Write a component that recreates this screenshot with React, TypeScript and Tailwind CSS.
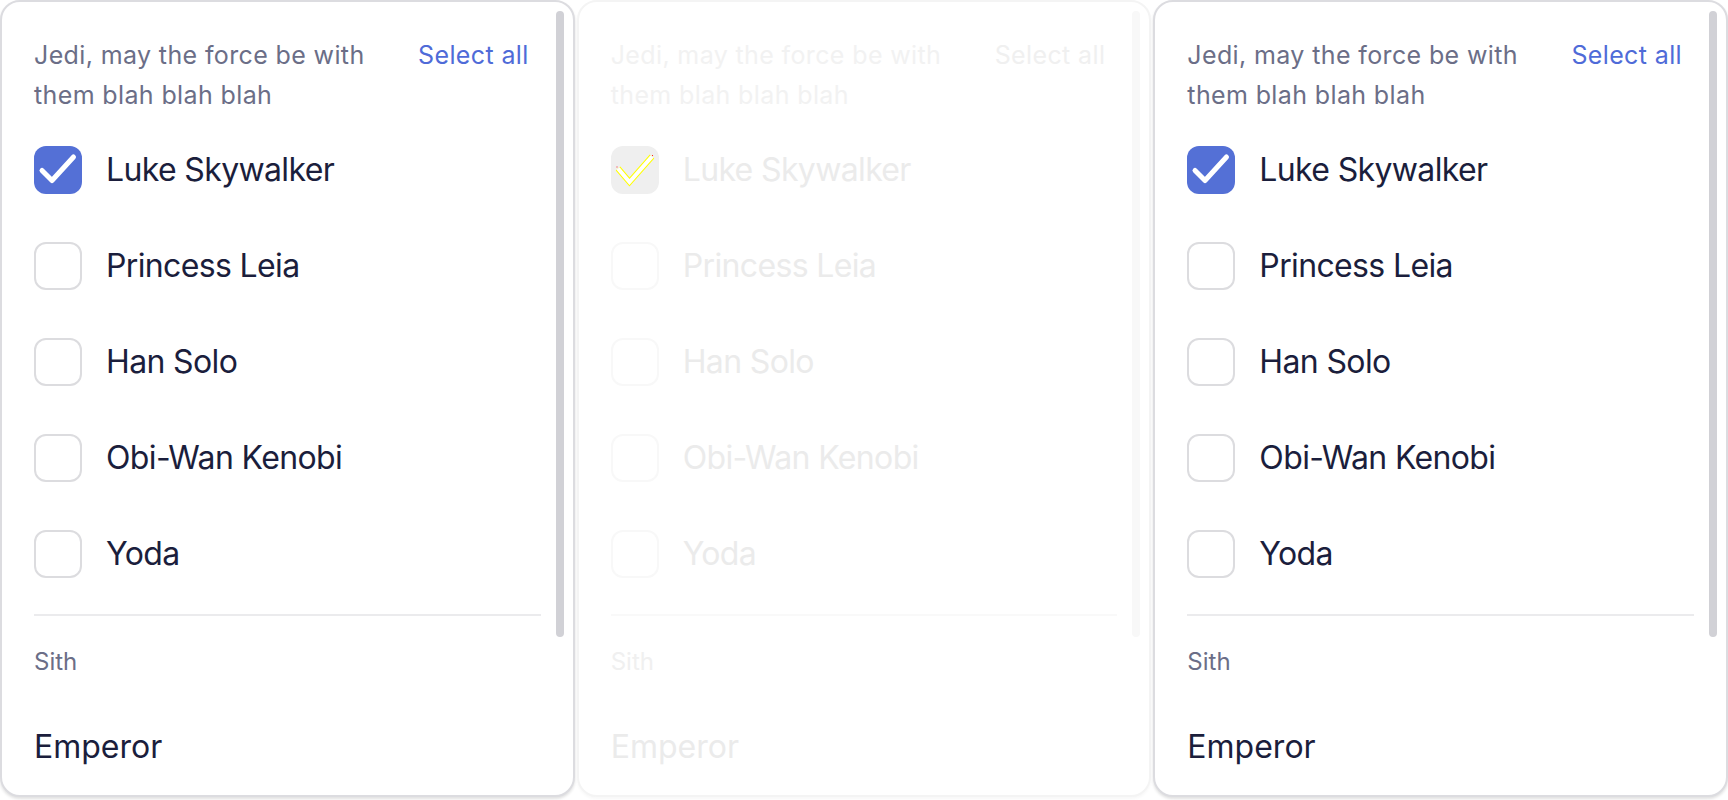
import clsx from 'clsx'

const jedi = ['Luke Skywalker', 'Princess Leia', 'Han Solo', 'Obi-Wan Kenobi', 'Yoda']

function Check() {
  return (
    <svg className="h-12 w-12" viewBox="0 0 48 48" fill="none">
      <path d="M8 24.5 18 34.5 39.5 11" stroke="white" strokeWidth={5} strokeLinecap="round" strokeLinejoin="round" />
    </svg>
  )
}

// disabled check renders as an outlined stroke
function GhostCheck() {
  return (
    <svg className="h-12 w-12" viewBox="0 0 48 48" fill="none">
      <path d="M7 22.5 18.5 36 41 10.5" stroke="#ffff00" strokeWidth={6} strokeLinejoin="miter" />
      <path d="M7 22.5 18.5 36 41 10.5" stroke="white" strokeWidth={4} strokeLinejoin="miter" />
      <rect x="5.5" y="20.5" width="1" height="1" fill="#ff2020" />
      <rect x="41" y="9" width="1" height="1" fill="#ff2020" />
    </svg>
  )
}

function Panel({ disabled }: { disabled?: boolean }) {
  return (
    <div
      className={clsx(
        'relative h-[797px] min-w-0 flex-1 overflow-hidden rounded-[20px] border-2 bg-white',
        disabled ? 'border-[#f4f4f4] shadow-[0_2px_3px_rgba(0,0,0,0.03)]' : 'border-[#dcdce0] shadow-[0_2px_3px_rgba(0,0,0,0.12)]'
      )}
    >
      <div className="px-8 pt-[33px]">
        {/* Header */}
        <div className="flex items-start justify-between pr-[12px]">
          <p className={clsx('w-[360px] text-[25px] leading-[40px] tracking-[0.015em]', disabled ? 'text-[#f2f2f2]' : 'text-[#6b6e87]')}>
            Jedi, may the force be with them blah blah blah
          </p>
          <button className={clsx('text-[25px] leading-[40px] tracking-[0.015em]', disabled ? 'text-[#f0f0f0]' : 'text-[#4f6bd8]')}>
            Select all
          </button>
        </div>

        {/* Jedi */}
        <ul className="mt-[31px] flex flex-col gap-12">
          {jedi.map((name, i) => (
            <li key={name} className="flex h-12 items-center gap-6">
              {i === 0 ? (
                <span
                  className={clsx(
                    'flex h-12 w-12 shrink-0 items-center justify-center rounded-xl',
                    disabled ? 'bg-[#efefef]' : 'bg-[#5470d6]'
                  )}
                >
                  {disabled ? <GhostCheck /> : <Check />}
                </span>
              ) : (
                <span
                  className={clsx(
                    'h-12 w-12 shrink-0 rounded-xl border-2 bg-white',
                    disabled ? 'border-[#f8f8f8]' : 'border-[#dcdcdf]'
                  )}
                />
              )}
              <span
                className={clsx(
                  'text-[32px] leading-[48px] tracking-[-0.02em]',
                  disabled ? 'text-[#ebebeb]' : 'text-[#1b1e3c]'
                )}
              >
                {name}
              </span>
            </li>
          ))}
        </ul>

        <div className={clsx('mt-[36px] h-[2px]', disabled ? 'bg-[#f9f9f9]' : 'bg-[#ebebed]')} />

        {/* Sith */}
        <p className={clsx('mt-[26px] text-[24px] leading-[40px]', disabled ? 'text-[#f0f0f0]' : 'text-[#6b6e87]')}>Sith</p>
        <p className={clsx('mt-[41px] text-[32px] leading-[48px]', disabled ? 'text-[#ebebeb]' : 'text-[#1b1e3c]')}>
          Emperor
        </p>
      </div>

      {/* scrollbar thumb */}
      <div
        className={clsx(
          'absolute right-[9px] top-[9px] h-[626px] w-2 rounded-full',
          disabled ? 'bg-[#f8f8f8]' : 'bg-[#d1d1d6]'
        )}
      />
    </div>
  )
}

export default function App() {
  return (
    <div className="flex h-[800px] w-[1728px] items-start gap-[2px] bg-white [font-family:Inter,sans-serif]">
      <Panel />
      <Panel disabled />
      <Panel />
    </div>
  )
}
